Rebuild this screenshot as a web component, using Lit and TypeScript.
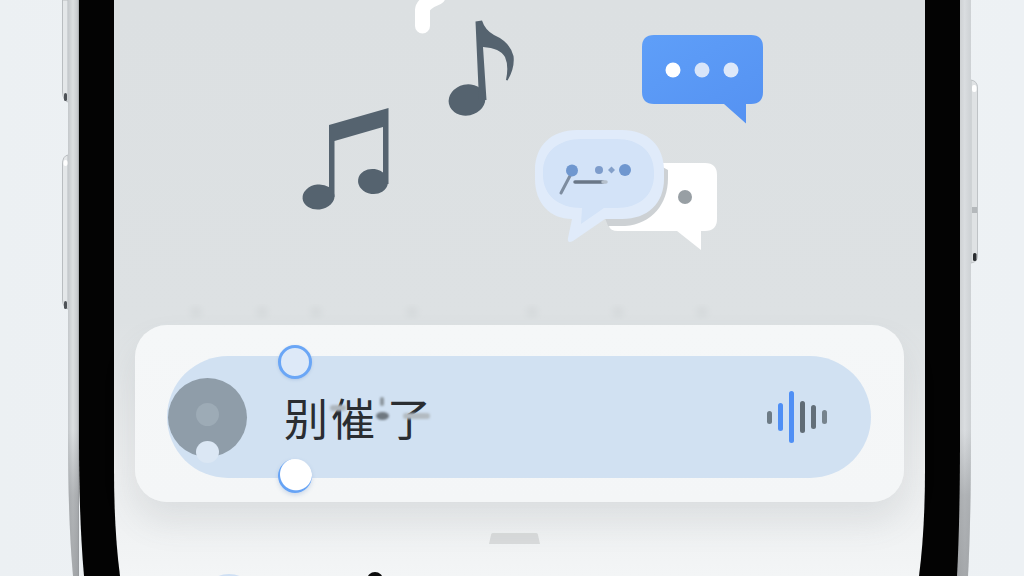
import { LitElement, html, css } from "lit";
import { customElement } from "lit/decorators.js";

const BARS = [
  { h: 13, c: "#6d7b86" },
  { h: 28, c: "#4f8ff5" },
  { h: 52, c: "#4f8ff5" },
  { h: 32, c: "#606c76" },
  { h: 24, c: "#636f79" },
  { h: 14, c: "#76838d" },
];

@customElement("app-root")
export class AppRoot extends LitElement {
  static styles = css`
    :host {
      display: block;
      position: relative;
      width: 1024px;
      height: 576px;
      overflow: hidden;
      background: linear-gradient(90deg, #ecf0f3, #f0f3f5 50%, #edf1f4);
      font-family: "Noto Sans CJK SC", "Liberation Sans", sans-serif;
    }
    .layer {
      position: absolute;
      inset: 0;
      width: 1024px;
      height: 576px;
      display: block;
    }
    .screen {
      position: relative;
      padding: 325px 120px 0 135px;
      box-sizing: border-box;
      height: 576px;
    }
    .card {
      box-sizing: border-box;
      width: 769px;
      height: 177px;
      padding: 31px 33px 24px 32px;
      border-radius: 32px;
      background: linear-gradient(180deg, #f5f7f8, #f4f6f7);
      box-shadow: 0 20px 34px rgba(90, 98, 104, 0.12);
    }
    .pill {
      position: relative;
      height: 122px;
      border-radius: 61px;
      background: #d1e1f2;
      display: flex;
      align-items: center;
      padding: 0 44px 0 1px;
    }
    .avatar {
      position: relative;
      flex: none;
      width: 79px;
      height: 79px;
      border-radius: 50%;
      background: #8f9da9;
      display: flex;
      justify-content: center;
    }
    .avatar-core {
      width: 23px;
      height: 23px;
      margin-top: 25px;
      border-radius: 50%;
      background: #9dabb6;
    }
    .avatar-dot {
      position: absolute;
      left: 28px;
      top: 63px;
      width: 23px;
      height: 22px;
      border-radius: 50%;
      background: #dbe7f4;
    }
    .label {
      margin-left: 37px;
      font-size: 44px;
      line-height: 60px;
      letter-spacing: 3px;
      color: #2a2d31;
      white-space: nowrap;
      position: relative;
    }
    .last {
      margin-left: 9px;
    }
    .smudge {
      position: absolute;
      border-radius: 4px;
      filter: blur(1.2px);
    }
    .s1 { left: 46px; top: 18px; width: 16px; height: 6px; background: #aeb6bd; }
    .s2 { left: 92px; top: 25px; width: 13px; height: 8px; background: #6f7880; border-radius: 50%; }
    .s3 { left: 119px; top: 26px; width: 27px; height: 6px; background: #b3bbc2; }
    .s4 { left: 96px; top: 10px; width: 4px; height: 9px; background: #8d969e; }
    .bars {
      margin-left: auto;
      display: flex;
      align-items: center;
      gap: 6px;
    }
    .bar {
      width: 5px;
      border-radius: 3px;
    }
    .handle {
      position: absolute;
      left: 111px;
      width: 34px;
      height: 34px;
      border-radius: 50%;
      box-sizing: border-box;
    }
    .handle.top {
      top: -11px;
      background: #dde9f8;
      border: 3px solid #6aa6f6;
      box-shadow: 0 1px 3px rgba(90, 130, 190, 0.25);
    }
    .handle.bottom {
      top: 103px;
      background: radial-gradient(circle at 53% 45%, #ffffff 15.5px, #66a3f5 16.5px);
      box-shadow: 0 2px 4px rgba(90, 130, 190, 0.25);
    }
  `;

  render() {
    return html`
      <svg class="layer" viewBox="0 0 1024 576" aria-hidden="true">
        <defs>
          <linearGradient id="scr" x1="0" y1="0" x2="0" y2="1">
            <stop offset="0" stop-color="#dce0e2" />
            <stop offset="0.56" stop-color="#dde1e3" />
            <stop offset="0.8" stop-color="#ebedee" />
            <stop offset="1" stop-color="#f3f5f6" />
          </linearGradient>
          <linearGradient id="metalL" x1="0" y1="0" x2="1" y2="0">
            <stop offset="0" stop-color="#c4c8cb" />
            <stop offset="0.45" stop-color="#dcdfe1" />
            <stop offset="0.85" stop-color="#c8cbce" />
            <stop offset="1" stop-color="#9fa2a5" />
          </linearGradient>
          <linearGradient id="metalR" x1="0" y1="0" x2="1" y2="0">
            <stop offset="0" stop-color="#9a9da0" />
            <stop offset="0.2" stop-color="#c9ccce" />
            <stop offset="0.6" stop-color="#dadde0" />
            <stop offset="1" stop-color="#cdd1d4" />
          </linearGradient>
          <linearGradient id="shade" x1="0" y1="0" x2="0" y2="1">
            <stop offset="0" stop-color="#8f9295" stop-opacity="0" />
            <stop offset="0.45" stop-color="#8f9295" stop-opacity="0.55" />
            <stop offset="1" stop-color="#8f9295" stop-opacity="0.7" />
          </linearGradient>
        </defs>
        <!-- side buttons -->
        <path d="M68 0H62.500V92Q63 101 68 102Z" fill="#e4e7e9" stroke="#b9bdc0" stroke-width="1" />
        <rect x="64" y="93" width="3" height="8" rx="1.500" fill="#4e5257" />
        <path d="M68 155Q62.500 156 62.500 164V300Q63 308 68 309Z" fill="#e4e7e9" stroke="#b9bdc0" stroke-width="1" />
        <rect x="63.500" y="160" width="4" height="6" rx="2" fill="#fff" />
        <rect x="64" y="301" width="3" height="8" rx="1.500" fill="#4e5257" />
        <path d="M971 80Q977.500 81 977.500 88V256Q977.500 262 971 263Z" fill="#dfe2e4" stroke="#bfc3c6" stroke-width="1" />
        <rect x="972" y="85" width="4.500" height="7" rx="2" fill="#fff" />
        <rect x="973" y="253" width="3.500" height="8" rx="1.500" fill="#2a2d30" />
        <path d="M972 207H977V213H972Z" fill="#b4b8bb" />
        <!-- metal band -->
        <path d="M68 0H79V576H73Q68 520 68 440Z" fill="url(#metalL)" />
        <path d="M960 0H971V440Q971 520 968 576H955Z" fill="url(#metalR)" />
        <path d="M68 430H79V576H73Q68 520 68 430Z" fill="url(#shade)" />
        <path d="M960 430H971Q971 520 968 576H955Z" fill="url(#shade)" />
        <!-- bezel and screen -->
        <path d="M79 0H960V440Q960 520 957 576H84Q79 520 79 440Z" fill="#030303" />
        <path d="M114 0H925V470Q925 530 919 576H120Q114 530 114 470Z" fill="url(#scr)" />
      </svg>

      <svg class="layer" viewBox="0 0 1024 576" aria-hidden="true">
        <defs>
          <linearGradient id="blue" x1="0.1" y1="0" x2="0.9" y2="1">
            <stop offset="0" stop-color="#5e9ef8" />
            <stop offset="1" stop-color="#5592f2" />
          </linearGradient>
          <filter id="soft"><feGaussianBlur stdDeviation="3" /></filter>
          <filter id="blur1"><feGaussianBlur stdDeviation="0.700" /></filter>
        </defs>
        <!-- faint dots behind the card -->
        <g fill="#d6dadc" filter="url(#soft)">
          <circle cx="196" cy="312" r="6" />
          <circle cx="262" cy="312" r="6" />
          <circle cx="316" cy="312" r="6" />
          <circle cx="412" cy="312" r="6" />
          <circle cx="532" cy="312" r="6" />
          <circle cx="618" cy="312" r="6" />
          <circle cx="702" cy="312" r="6" />
        </g>
        <!-- white note fragment -->
        <path d="M422.500 26V10Q423 3 438 -3" fill="none" stroke="#fff" stroke-width="15" stroke-linecap="round" />
        <!-- single note -->
        <g fill="#55636f">
          <ellipse cx="467" cy="100" rx="18.500" ry="15.500" transform="rotate(-12 467 100)" />
          <path d="M475.500 21.500L482 20.500Q485 30 494 35Q510 42 513.500 56Q515 68 507.500 80.500L506 80Q509 66 505 57Q500 48 483 47L486.500 100H479Z" />
        </g>
        <!-- double note -->
        <g fill="#55636f">
          <ellipse cx="318.500" cy="197" rx="16" ry="12.500" transform="rotate(-6 318.500 197)" />
          <ellipse cx="373" cy="181.500" rx="15" ry="12.500" transform="rotate(8 373 181.500)" />
          <path d="M329 125L388.500 108V184H383V127L334.500 141V197H329Z" />
        </g>
        <!-- blue bubble -->
        <path d="M654 35H751Q763 35 763 47V92Q763 104 751 104H746V123.500L724 104H654Q642 104 642 92V47Q642 35 654 35Z" fill="url(#blue)" />
        <circle cx="673" cy="70" r="7.500" fill="#fff" />
        <circle cx="702" cy="70" r="7.500" fill="#d8e5f9" />
        <circle cx="731" cy="70" r="7.500" fill="#dde8f9" />
        <!-- white bubble -->
        <path d="M660 163H705Q717 163 717 175V219Q717 231 705 231H701V250L677 231H618Q610 231 609 226L640 190Z" fill="#fff" />
        <circle cx="685" cy="197" r="7" fill="#989fa4" />
        <!-- pale bubble with shadow -->
        <path d="M608 226H625C652 224 668 204 668 178V170L650 160L600 205Z" fill="#cdd1d4" filter="url(#blur1)" />
        <path d="M577 130H622C648 130 664 146 664 170V179C664 203 648 219 622 219H605L573 241Q567 244 568 238L572 219C550 219 535 203 535 179V170C535 146 551 130 577 130Z" fill="#e0ebfa" />
        <path d="M582 139H616C640 139 654 152 654 172V175C654 195 640 208 616 208H604L581 224L582 208C558 208 543 195 543 175V172C543 152 558 139 582 139Z" fill="#d3e3f8" filter="url(#blur1)" />
        <!-- bubble marks -->
        <path d="M572 172L561 193" stroke="#7e8da0" stroke-width="3" stroke-linecap="round" />
        <circle cx="572" cy="170.500" r="6" fill="#6f97cf" />
        <path d="M575 182H603" stroke="#6a7787" stroke-width="3.500" stroke-linecap="round" />
        <path d="M603 182H606" stroke="#b5c0cc" stroke-width="3.500" stroke-linecap="round" />
        <circle cx="599" cy="170" r="4" fill="#7d9ccb" />
        <path d="M611.500 166.500L615 170L611.500 173.500L608 170Z" fill="#84a0c9" />
        <circle cx="625" cy="170" r="6" fill="#6f97cf" />
        <!-- home indicator -->
        <path d="M493 533H536Q538 533 538 535L540 544H489L491 535Q491 533 493 533Z" fill="#d9dbdc" filter="url(#blur1)" />
        <!-- bottom fragments -->
        <ellipse cx="229" cy="581" rx="15" ry="7" fill="#cfe0f4" />
        <circle cx="375" cy="580" r="8" fill="#0c0c0c" />
      </svg>

      <div class="screen">
        <div class="card">
          <div class="pill">
            <div class="avatar">
              <div class="avatar-core"></div>
              <div class="avatar-dot"></div>
            </div>
            <div class="label">
              别催<span class="last">了</span>
              <i class="smudge s1"></i><i class="smudge s2"></i><i class="smudge s3"></i><i class="smudge s4"></i>
            </div>
            <div class="bars">
              ${BARS.map((b) => html`<div class="bar" style="height:${b.h}px;background:${b.c}"></div>`)}
            </div>
            <div class="handle top"></div>
            <div class="handle bottom"></div>
          </div>
        </div>
      </div>
    `;
  }
}
